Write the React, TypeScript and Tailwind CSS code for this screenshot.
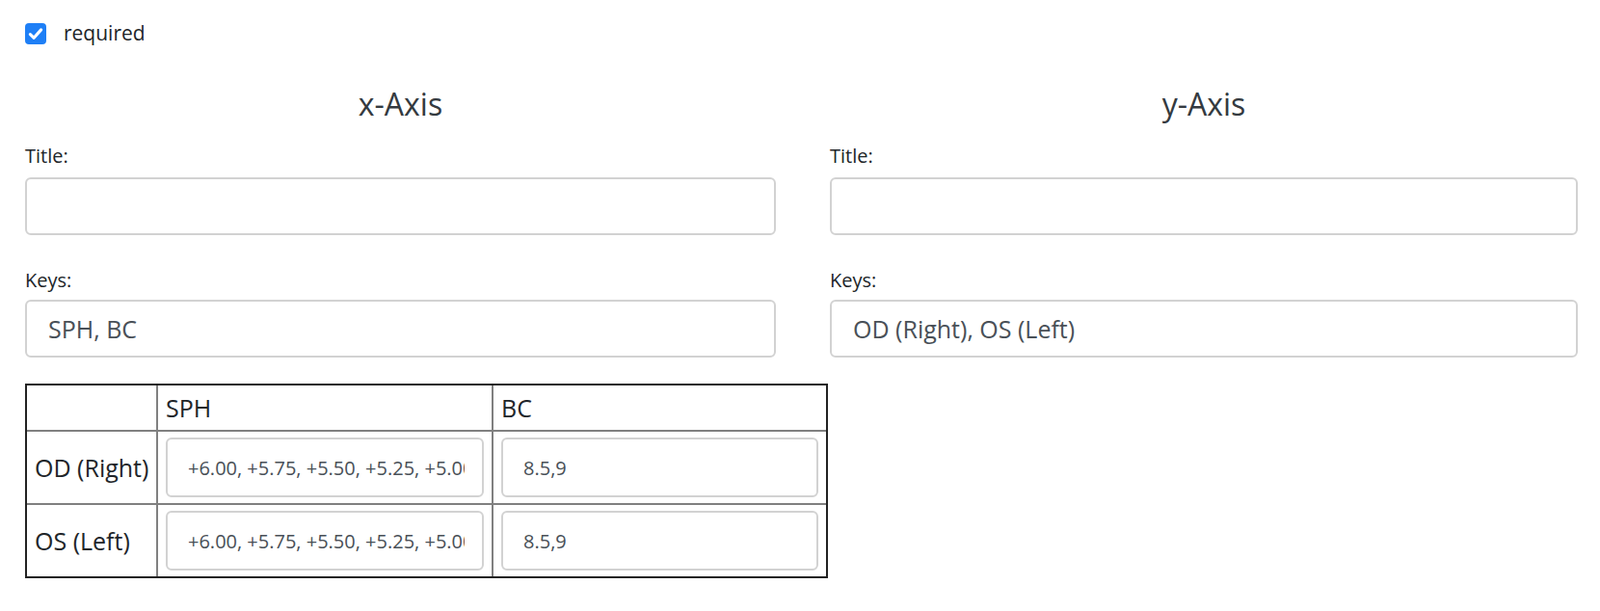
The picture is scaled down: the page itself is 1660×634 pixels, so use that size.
import React from "react";

const font = { fontFamily: '"Open Sans", "Noto Sans", sans-serif' };

type FieldProps = {
  label: string;
  value?: string;
  gapClass: string;
};

function Field({ label, value = "", gapClass }: FieldProps) {
  return (
    <div>
      <label className={"block text-[20px] leading-[30px] text-[#212529] " + gapClass}>{label}</label>
      <input
        type="text"
        readOnly
        value={value}
        className="block w-full h-[60px] px-[22px] rounded-[6px] border-2 border-[#d2d2d2] bg-white text-[25px] text-[#495057] outline-none"
        style={font}
      />
    </div>
  );
}

function AxisColumn({ title, keys }: { title: string; keys: string }) {
  return (
    <div>
      <h2 className="text-center text-[32px] leading-[38px] font-normal text-[#343a40] mb-[20px]">{title}</h2>
      <Field label="Title:" gapClass="mb-[7px]" />
      <div className="mt-[32px]">
        <Field label="Keys:" value={keys} gapClass="mb-[5px]" />
      </div>
    </div>
  );
}

function CellInput({ value }: { value: string }) {
  return (
    <input
      type="text"
      readOnly
      value={value}
      className="block w-full h-[62px] pl-[21px] pr-[18px] rounded-[6px] border-2 border-[#d2d2d2] bg-white text-[20px] text-[#495057] outline-none"
      style={font}
    />
  );
}

const sph = "+6.00, +5.75, +5.50, +5.25, +5.00, +4.75, +4.50, +4.25, +4.00";
const rows = [
  { eye: "OD (Right)", sph, bc: "8.5,9" },
  { eye: "OS (Left)", sph, bc: "8.5,9" },
];

export default function App() {
  return (
    <div className="min-h-screen bg-white pl-[26px] text-[#212529]" style={font}>
      <label className="flex items-center gap-[18px] pt-[20px] h-[50px]">
        <span className="flex items-center justify-center w-[22px] h-[22px] rounded-[4px] bg-[#1e7ff6]">
          <svg width="18" height="18" viewBox="0 0 16 16" fill="none">
            <path d="M3 8.6 L6.4 11.8 L13 4.3" stroke="white" strokeWidth="2.8" strokeLinecap="round" strokeLinejoin="round" />
          </svg>
        </span>
        <span className="text-[21px] leading-[30px] -mt-[3px]">required</span>
      </label>

      <div className="grid grid-cols-[779px_776px] gap-x-[56px] mt-[39px]">
        <AxisColumn title="x-Axis" keys="SPH, BC" />
        <AxisColumn title="y-Axis" keys="OD (Right), OS (Left)" />
      </div>

      <table className="mt-[27px] w-[833px] table-fixed border-separate border-spacing-0 border-2 border-[#222] text-[25px] text-[#212529]">
        <colgroup>
          <col className="w-[134px]" />
          <col className="w-[348px]" />
          <col className="w-[347px]" />
        </colgroup>
        <thead>
          <tr>
            <th className="h-[46px] px-2 py-0 font-normal text-left leading-[36px]" />
            <th className="h-[46px] px-2 py-0 font-normal text-left leading-[36px] border-l-2 border-[#808080]">SPH</th>
            <th className="h-[46px] px-2 py-0 font-normal text-left leading-[36px] border-l-2 border-[#808080]">BC</th>
          </tr>
        </thead>
        <tbody>
          {rows.map((r) => (
            <tr key={r.eye}>
              <td className="px-2 py-[6px] leading-[36px] whitespace-nowrap border-t-2 border-[#808080]">{r.eye}</td>
              <td className="px-2 py-[6px] border-t-2 border-l-2 border-[#808080]">
                <CellInput value={r.sph} />
              </td>
              <td className="px-2 py-[6px] border-t-2 border-l-2 border-[#808080]">
                <CellInput value={r.bc} />
              </td>
            </tr>
          ))}
        </tbody>
      </table>
    </div>
  );
}
